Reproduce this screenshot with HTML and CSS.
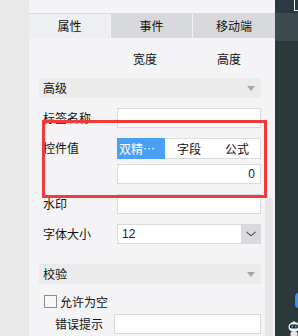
FILE: index.html
```html
<!DOCTYPE html>
<html>
<head>
<meta charset="utf-8">
<link rel="stylesheet" href="styles.css">
</head>
<body>
<div class="screen">
  <div class="gutter"></div>
  <div class="panel">
    <div class="panel-top"></div>
    <div class="tabs">
      <div class="tab active">属性</div>
      <div class="tab">事件</div>
      <div class="tab">移动端</div>
    </div>
    <div class="body">
      <div class="content">
        <div class="dims"><span class="dim">宽度</span><span class="dim">高度</span></div>
        <div class="section"><span>高级</span><i class="caret"></i></div>
        <div class="row gap10">
          <label class="lbl">标签名称</label>
          <div class="input"></div>
        </div>
        <div class="row gap10">
          <label class="lbl">控件值</label>
          <div class="stack">
            <div class="seg">
              <span class="seg-item on">双精…</span>
              <span class="seg-item">字段</span>
              <span class="seg-item">公式</span>
            </div>
            <div class="input num">0</div>
          </div>
        </div>
        <div class="row gap10">
          <label class="lbl">水印</label>
          <div class="input"></div>
        </div>
        <div class="row gap20">
          <label class="lbl">字体大小</label>
          <div class="select">
            <span class="select-val">12</span>
            <span class="select-btn"><svg width="10" height="6" viewBox="0 0 10 6"><polyline points="0.5,0.8 5,4.8 9.5,0.8" fill="none" stroke="#4a4a4a" stroke-width="1.1"/></svg></span>
          </div>
        </div>
        <div class="section"><span>校验</span><i class="caret"></i></div>
        <div class="check"><span class="box"></span><span>允许为空</span></div>
        <div class="row indent">
          <label class="lbl">错误提示</label>
          <div class="input"></div>
        </div>
      </div>
      <div class="track"><div class="thumb"></div></div>
    </div>
  </div>
  <div class="dark">
    <div class="dark-top"><span class="corner"></span></div>
    <div class="dark-band"></div>
    <div class="dark-main"></div>
    <span class="float-blue"></span>
    <svg class="robot" width="12" height="16" viewBox="0 0 12 16">
      <ellipse cx="6" cy="6" rx="5.5" ry="5" fill="#f2f4f6"/>
      <rect x="1.8" y="3.6" width="8.4" height="3.8" rx="1.9" fill="#1c2a34"/>
      <circle cx="4.2" cy="5.5" r="0.9" fill="#39c6f0"/>
      <circle cx="7.8" cy="5.5" r="0.9" fill="#39c6f0"/>
      <rect x="2.5" y="10.5" width="7" height="5.5" rx="2" fill="#e6e9ec"/>
      <rect x="5.4" y="0" width="1.2" height="1.6" fill="#dde2e6"/>
    </svg>
  </div>
  <div class="highlight"></div>
</div>
</body>
</html>
```
FILE: styles.css
```css
* { box-sizing: border-box; }
html, body { margin: 0; padding: 0; }
body {
  width: 298px;
  height: 336px;
  overflow: hidden;
  font-family: "Noto Sans CJK SC", "Noto Sans", sans-serif;
  font-size: 12px;
  color: #111;
}
.screen {
  position: relative;
  display: flex;
  width: 298px;
  height: 336px;
  overflow: hidden;
}
.gutter { width: 29px; background: #e8e8e8; flex: none; }
.panel {
  width: 246px;
  flex: none;
  background: #f4f4f6;
  display: flex;
  flex-direction: column;
  overflow: hidden;
}
.panel-top { height: 14px; flex: none; border-bottom: 1px solid #dadbde; }
.tabs {
  flex: none;
  display: grid;
  grid-template-columns: 81px 81px 82px;
  column-gap: 1px;
  height: 24px;
  background: #f4f4f6;
}
.tab {
  background: #d8d9dc;
  text-align: center;
  line-height: 24px;
}
.tab.active { background: #eeeff1; }
.body { display: flex; flex: 1; min-height: 0; }
.content {
  width: 232px;
  padding-left: 10px;
  flex: none;
}
.dims {
  display: grid;
  grid-template-columns: 64px 84px 84px;
  height: 40px;
  padding-top: 2px;
  line-height: 38px;
}
.dim { text-align: center; }
.dim:first-child { grid-column: 2; }
.section {
  height: 20px;
  background: #ebebeb;
  display: flex;
  align-items: center;
  justify-content: space-between;
  padding: 0 6px 0 4px;
  margin-bottom: 10px;
  line-height: 20px;
}
.caret {
  width: 0; height: 0;
  border-left: 4px solid transparent;
  border-right: 4px solid transparent;
  border-top: 5px solid #a7a7a7;
  margin-top: 1px;
}
.row {
  display: grid;
  grid-template-columns: 78px 144px;
}
.gap10 { margin-bottom: 10px; }
.gap20 { margin-bottom: 20px; }
.lbl { padding-left: 4px; line-height: 20px; white-space: nowrap; }
.input {
  height: 20px;
  background: #fff;
  border: 1px solid #d9d9d9;
  line-height: 18px;
  font-family: "Liberation Sans", Arial, sans-serif;
}
.num { text-align: right; padding-right: 5px; color: #1b1b3a; }
.stack { display: flex; flex-direction: column; gap: 5px; }
.seg {
  height: 21px;
  display: grid;
  grid-template-columns: 48px 48px 48px;
  background: #fff;
  border: 1px solid #dcdcdc;
  border-left: none;
}
.seg-item {
  text-align: center;
  line-height: 19px;
  white-space: nowrap;
}
.seg-item.on {
  background: #4aa0f6;
  color: #fff;
  text-align: left;
  padding: 0 2px;
  margin-top: -1px;
  height: 21px;
  line-height: 21px;
}
.select {
  height: 20px;
  display: flex;
  background: #fff;
  border: 1px solid #d9d9d9;
  border-right: none;
}
.select-val {
  flex: 1;
  padding-left: 4px;
  line-height: 18px;
  font-family: "Liberation Sans", Arial, sans-serif;
  color: #1b1b3a;
}
.select-btn {
  width: 20px;
  margin: -1px 0;
  background: #d9dadd;
  display: flex;
  align-items: center;
  justify-content: center;
}
.check {
  display: flex;
  align-items: center;
  height: 14px;
  margin-bottom: 6px;
  padding-left: 5px;
  gap: 3px;
}
.box {
  width: 13px; height: 13px;
  border: 1px solid #8c8c8c;
  background: #f7f7f7;
}
.row.indent { grid-template-columns: 75px 147px; }
.row.indent .lbl { padding-left: 16px; }
.track {
  width: 8px;
  margin-left: 4px;
  flex: none;
  display: flex;
  flex-direction: column;
}
.thumb {
  margin-top: 160px;
  flex: 1;
  background: #e6e6e8;
  border-radius: 2px 2px 0 0;
}
.dark {
  position: relative;
  width: 23px;
  flex: none;
  display: flex;
  flex-direction: column;
  background: #2c393a;
}
.dark-top { height: 13px; flex: none; background: #2b3a40; position: relative; }
.corner {
  position: absolute;
  left: 19px; top: 0;
  width: 4px; height: 11px;
  border-left: 1.5px solid #fff;
  border-bottom: 1px solid #e8eef0;
}
.dark-band { height: 28px; flex: none; background: #3d4b50; }
.dark-main { flex: 1; background: #2c393a; }
.float-blue {
  position: absolute;
  left: 20px; top: 293px;
  width: 8px; height: 15px;
  border-radius: 4px;
  background: #3b8ff0;
}
.robot { position: absolute; left: 13px; top: 321px; }
.highlight {
  position: absolute;
  left: 42px; top: 120px;
  width: 225px; height: 78px;
  border: 3px solid #f03a3c;
}
```
